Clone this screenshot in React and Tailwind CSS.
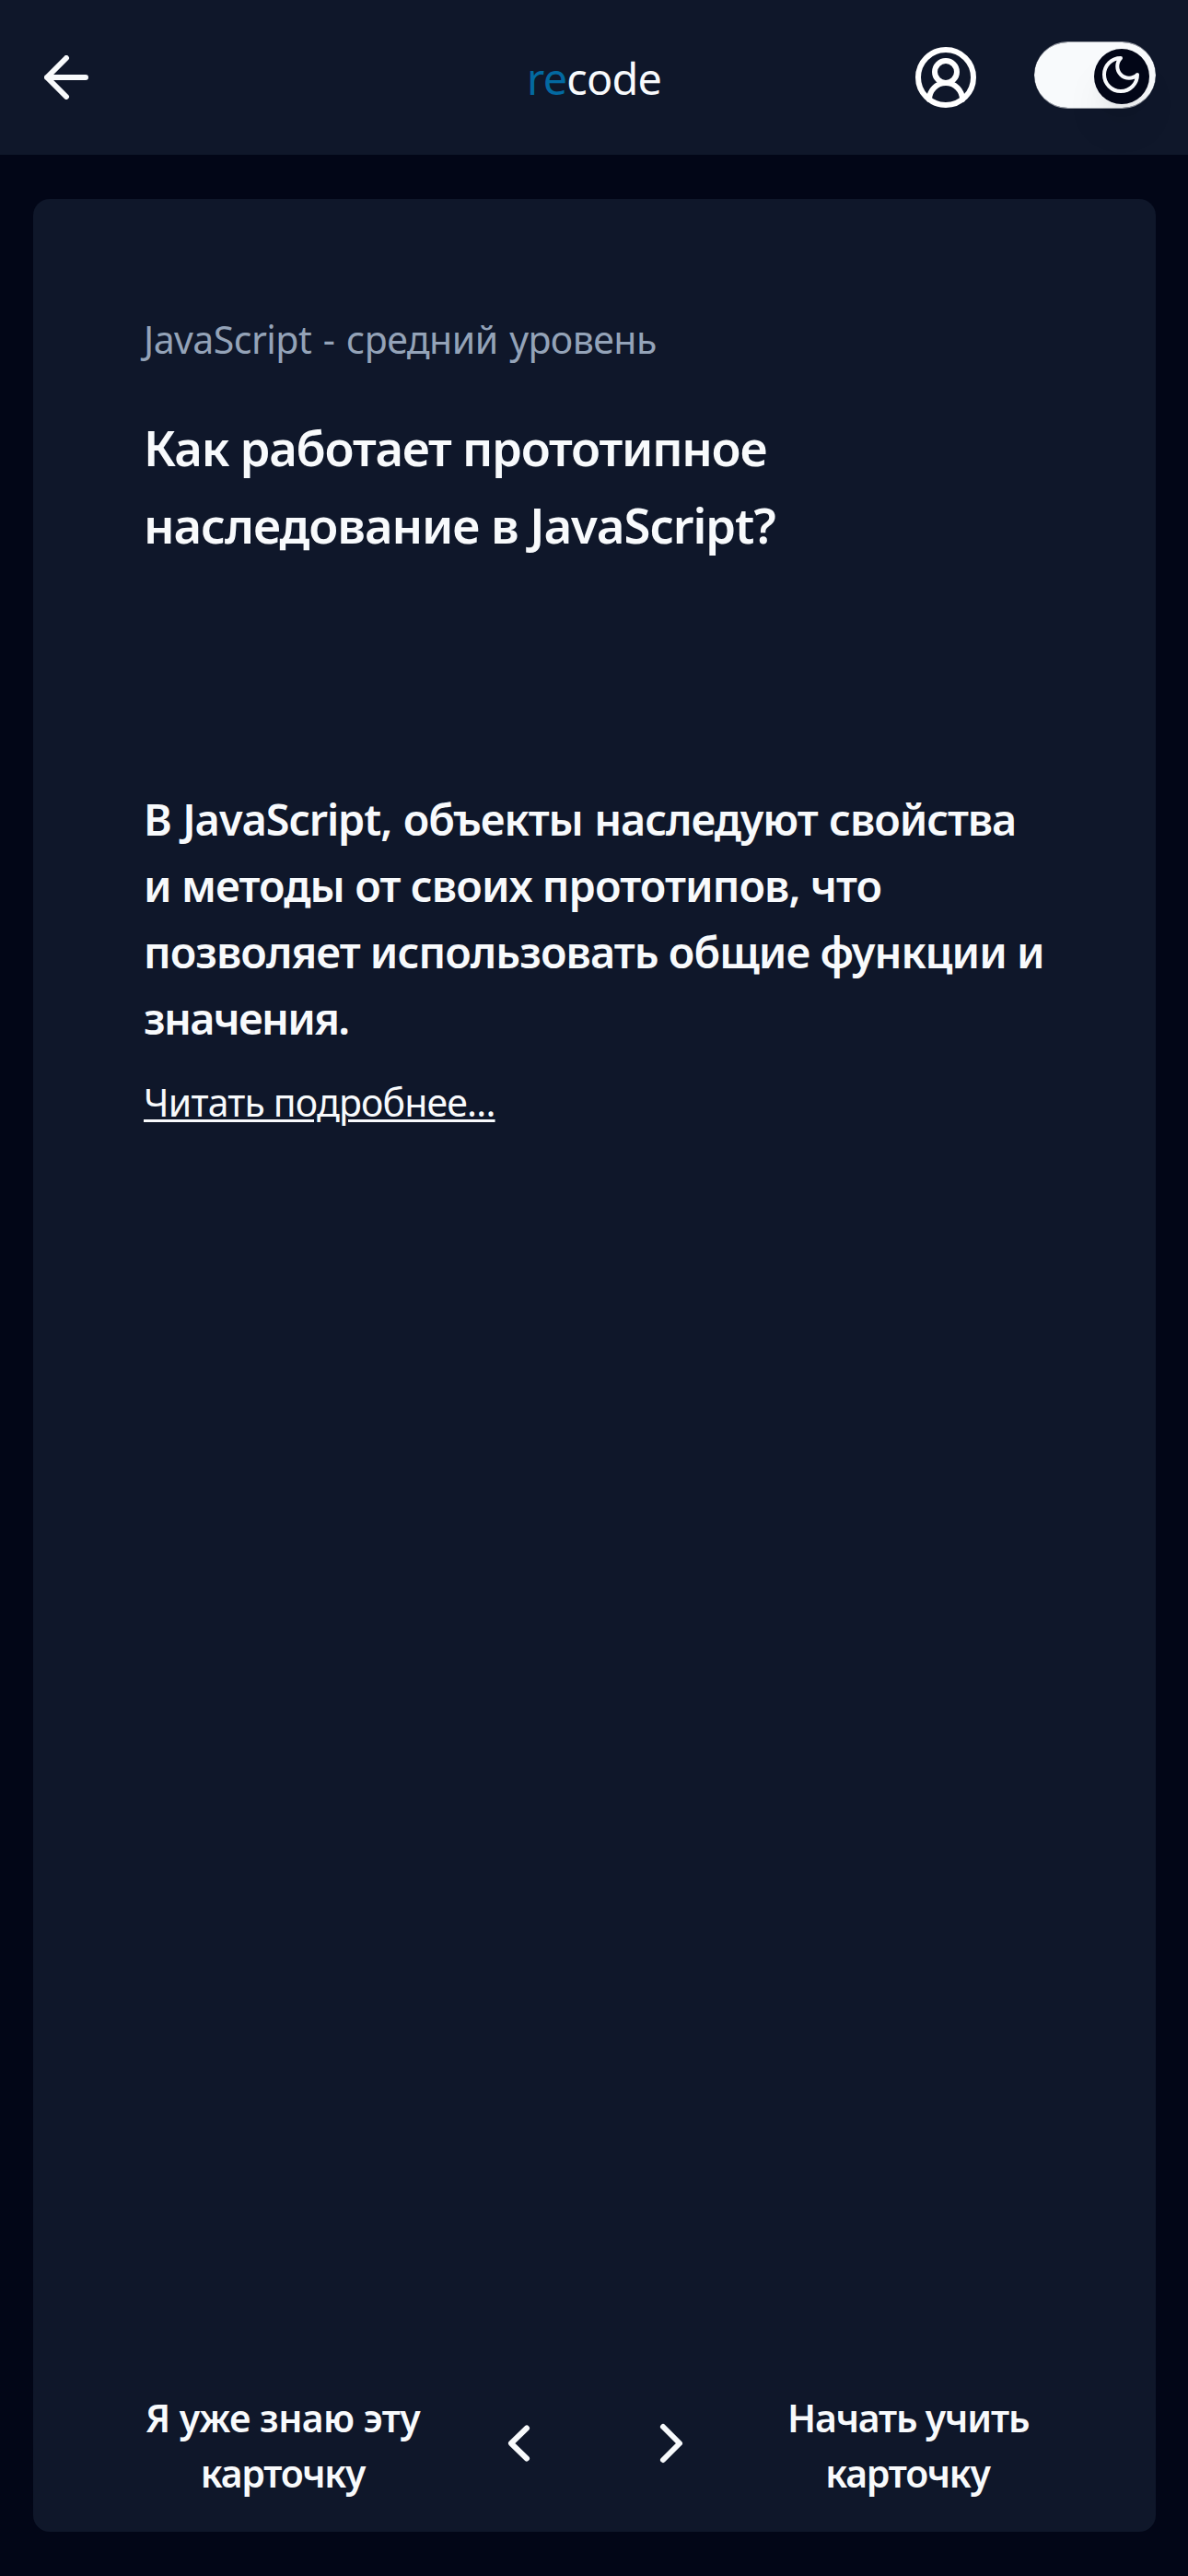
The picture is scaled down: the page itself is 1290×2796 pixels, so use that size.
import React from "react";

function ArrowLeft() {
  return (
    <svg className="h-12 w-12" viewBox="0 0 48 48" fill="none" stroke="currentColor" strokeWidth="6" strokeLinecap="round" strokeLinejoin="round">
      <path d="M45 24H3M24 3 3 24l21 21" />
    </svg>
  );
}

function UserIcon() {
  return (
    <svg className="h-[72px] w-[72px] text-white" viewBox="0 0 24 24" fill="none" stroke="currentColor" strokeWidth="2" strokeLinecap="round" strokeLinejoin="round">
      <path d="M18 20a6 6 0 0 0-12 0" />
      <circle cx="12" cy="10" r="4" />
      <circle cx="12" cy="12" r="10" />
    </svg>
  );
}

function MoonIcon() {
  return (
    <svg className="-mt-[3px] mr-[2px] h-12 w-12 shrink-0" viewBox="0 0 24 24" fill="none" stroke="currentColor" strokeWidth="2" strokeLinecap="round" strokeLinejoin="round">
      <path d="M12 3a6 6 0 0 0 9 9 9 9 0 1 1-9-9Z" />
    </svg>
  );
}

function Chevron({ d }) {
  return (
    <svg className="h-[72px] w-[72px]" viewBox="0 0 72 72" fill="none" stroke="currentColor" strokeWidth="6" strokeLinecap="round" strokeLinejoin="round">
      <path d={d} />
    </svg>
  );
}

function ThemeSwitch() {
  return (
    <button type="button" className="-mt-[5px] flex h-[73px] w-[132px] items-center justify-end rounded-full border-y border-[#f8fafc]/60 bg-[#f8fafc] bg-clip-padding pr-[7px]">
      <span className="mt-[2px] flex h-[60px] w-[60px] items-center justify-center rounded-full bg-[#020617] shadow-[0_30px_45px_-9px_rgba(0,0,0,0.1),0_12px_18px_-12px_rgba(0,0,0,0.1)]">
        <MoonIcon />
      </span>
    </button>
  );
}

export default function App() {
  return (
    <div className="flex h-[2796px] w-[1290px] flex-col bg-[#020617] font-['Noto_Sans',sans-serif] text-[#f8fafc]">
      <header className="flex h-[168px] shrink-0 items-center bg-[#0f172a] pr-[35px] pl-12">
        <ArrowLeft />
        <div className="mt-[2px] ml-[476px] text-[46.8px] leading-[72px] tracking-[-0.76px] whitespace-nowrap">
          <span className="text-[#0369a1]">re</span>code
        </div>
        <div className="ml-auto flex items-center gap-[60px]">
          <UserIcon />
          <ThemeSwitch />
        </div>
      </header>

      <main className="mt-12 mr-[35px] mb-12 ml-9 flex grow flex-col rounded-[18px] bg-[#0f172a] pt-[122px] pb-[34px] pl-[120px] whitespace-nowrap">
        <p className="text-[41px] leading-[60px] tracking-[-0.55px] [word-spacing:2.5px] text-[#94a3b8]">JavaScript - средний уровень</p>
        <h1 className="mt-[46px] text-[52.6px] leading-[84px] font-semibold">
          <span className="block tracking-[-1.24px]">Как работает прототипное</span>
          <span className="block tracking-[-1.07px]">наследование в JavaScript?</span>
        </h1>
        <div className="mt-[241px] text-[46.8px] leading-[72px] font-semibold">
          <p className="tracking-[-1.1px] [word-spacing:1.5px]">В JavaScript, объекты наследуют свойства</p>
          <p className="tracking-[-0.9px]">и методы от своих прототипов, что</p>
          <p className="tracking-[-0.96px]">позволяет использовать общие функции и</p>
          <p className="tracking-[-1.7px]">значения.</p>
        </div>
        <a href="#more" className="mt-[25px] self-start text-[41px] leading-[60px] tracking-[-0.83px] underline decoration-[3px] underline-offset-[3px]">
          Читать подробнее...
        </a>

        <footer className="mt-auto flex items-center">
          <button type="button" className="w-[305px] pr-[3px] text-center text-[41px] leading-[60px] font-semibold">
            <span className="block tracking-[-0.57px]">Я уже знаю эту</span>
            <span className="block tracking-[-1.21px]">карточку</span>
          </button>
          <div className="-mt-1 ml-[55px] flex gap-[105px]">
            <Chevron d="M56 19.5 39 36l17 16.5" />
            <Chevron d="m27 54 18-18-18-18" />
          </div>
          <button type="button" className="ml-[90px] w-[264px] pr-[3px] text-center text-[41px] leading-[60px] font-semibold">
            <span className="block tracking-[-1.17px]">Начать учить</span>
            <span className="block tracking-[-1.21px]">карточку</span>
          </button>
        </footer>
      </main>
    </div>
  );
}
